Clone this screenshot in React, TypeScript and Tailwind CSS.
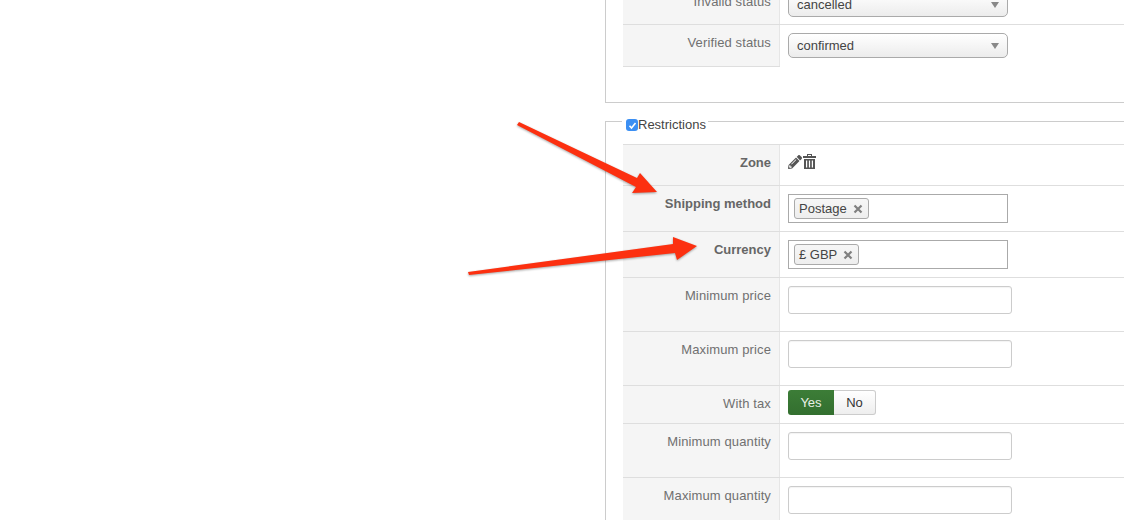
import type { ReactNode } from "react";
import { FaPencilAlt } from "react-icons/fa";

function Row({ label, bold, height, children }: { label: string; bold?: boolean; height: string; children: ReactNode }) {
  return (
    <div className={`flex border-t border-[#dedede] ${height}`}>
      <div
        className={`w-[157px] shrink-0 border-r border-[#e6e6e6] bg-[#f5f5f5] pr-[8px] pt-[9px] text-right text-[13px] leading-[18px] ${bold ? "font-bold text-[#666]" : "tracking-[0.12px] text-[#707070]"}`}
      >
        {label}
      </div>
      <div className="pl-[8px] pt-[8px]">{children}</div>
    </div>
  );
}

function SelectBox({ value }: { value: string }) {
  return (
    <div className="flex h-[25px] w-[220px] items-center justify-between rounded-[5px] border border-[#aaa] bg-gradient-to-b from-white to-[#ececec] pl-[8px] pr-[8px] text-[13px] text-[#444]">
      {value}
      <span className="h-0 w-0 border-x-[4px] border-t-[6px] border-x-transparent border-t-[#888]" />
    </div>
  );
}

function TextInput() {
  return <div className="h-[28px] w-[224px] rounded-[3px] border border-[#ccc] bg-white shadow-[inset_0_1px_1px_rgba(0,0,0,0.05)]" />;
}

function TagInput({ tag }: { tag: string }) {
  return (
    <div className="flex h-[29px] w-[220px] items-start border border-[#aaa] bg-white pl-[5px] pt-[3px]">
      <span className="flex h-[21px] items-center gap-[6px] rounded-[3px] border border-[#aaa] bg-gradient-to-b from-[#f6f6f6] to-[#eeeeee] pl-[4px] pr-[5px] text-[13px] text-[#444]">
        {tag}
        <svg width="10" height="10" viewBox="0 0 10 10">
          <path d="M1.5 1.5l7 7M8.5 1.5l-7 7" stroke="#808080" strokeWidth="2.2" />
        </svg>
      </span>
    </div>
  );
}

function Arrows() {
  return (
    <svg
      className="absolute left-0 top-0 drop-shadow-[0_1px_1px_rgba(0,0,0,0.35)]"
      width="1124"
      height="520"
      viewBox="0 0 1124 520"
    >
      <polygon fill="#fc3010" points="519,122 637,178 640,173 657,192 632,193 636,187 517,125" />
      <polygon fill="#fc3010" points="468,272 673,244 673,237 697,246 677,260 675,253 469,275" />
    </svg>
  );
}

export default function App() {
  return (
    <div className="relative h-[520px] w-[1124px] overflow-hidden bg-white font-['Liberation_Sans',Arial,sans-serif]">
      <div className="-mt-[17px] pl-[605px]">
        {/* Order status fieldset */}
        <div className="w-[560px] border-b border-l border-[#ccc] pb-[35px] pl-[17px]">
          <Row label="Invalid status" height="h-[41px]">
            <SelectBox value="cancelled" />
          </Row>
          <div className="w-[157px] border-b border-[#dedede]">
            <div className="w-[560px]">
              <Row label="Verified status" height="h-[42px]">
                <SelectBox value="confirmed" />
              </Row>
            </div>
          </div>
        </div>

        {/* Restrictions fieldset */}
        <div className="mt-[18px] w-[560px] border-l border-t border-[#ccc] pl-[17px]">
          <div className="-mt-[9px] -ml-[1px] mb-[2px] flex h-[29px] w-[86px] items-start bg-white pl-[4px] text-[13px] leading-[18px] text-[#444]">
            <span className="mt-[6px] flex h-[12px] w-[12px] items-center justify-center rounded-[3px] bg-[#3b8ff3]">
              <svg width="9" height="9" viewBox="0 0 9 9">
                <path d="M1.5 4.8l2 2.2 4-5" fill="none" stroke="white" strokeWidth="1.6" />
              </svg>
            </span>
            <span className="mt-[3px]">Restrictions</span>
          </div>
          <Row label="Zone" bold height="h-[41px]">
            <div className="flex items-center gap-[1px] pt-[1px] text-[#555]">
              <FaPencilAlt size={14} />
              <svg width="13" height="15" viewBox="0 0 13 15">
                <path
                  fill="currentColor"
                  fillRule="evenodd"
                  d="M4 0h5v2h4v2H0V2h4zM5 1v1h3V1zM1 5h11v10H1zM3 6.5v7h1.2v-7zM5.9 6.5v7h1.2v-7zM8.8 6.5v7H10v-7z"
                />
              </svg>
            </div>
          </Row>
          <Row label="Shipping method" bold height="h-[46px]">
            <TagInput tag="Postage" />
          </Row>
          <Row label="Currency" bold height="h-[46px]">
            <TagInput tag="£ GBP" />
          </Row>
          <Row label="Minimum price" height="h-[54px]">
            <TextInput />
          </Row>
          <Row label="Maximum price" height="h-[54px]">
            <TextInput />
          </Row>
          <Row label="With tax" height="h-[38px]">
            <div className="-mt-[4px] flex h-[25px] w-[88px] text-[13px]">
              <span className="flex w-[46px] items-center justify-center rounded-l-[3px] bg-gradient-to-b from-[#3c7d37] to-[#336f2f] text-[#e8f0e6]">
                Yes
              </span>
              <span className="flex w-[42px] items-center justify-center rounded-r-[3px] border border-l-0 border-[#ccc] bg-gradient-to-b from-white to-[#eee] text-[#333]">
                No
              </span>
            </div>
          </Row>
          <Row label="Minimum quantity" height="h-[54px]">
            <TextInput />
          </Row>
          <Row label="Maximum quantity" height="h-[54px]">
            <TextInput />
          </Row>
        </div>
      </div>
      <Arrows />
    </div>
  );
}
